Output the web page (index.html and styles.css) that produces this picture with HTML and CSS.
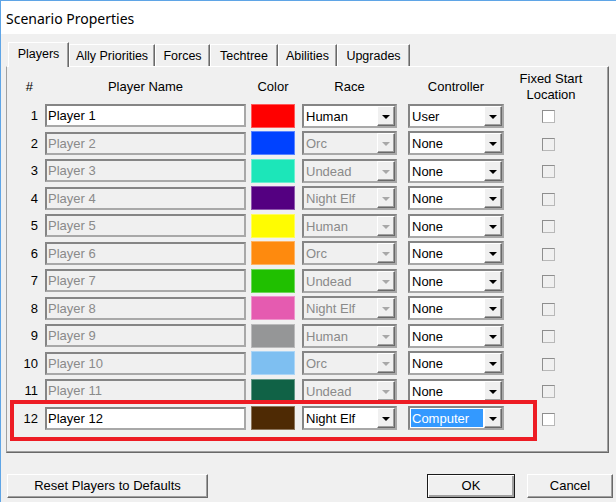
FILE: index.html
```html
<!DOCTYPE html>
<html>
  <head>
    <meta charset="utf-8">
    <title>Scenario Properties</title>
    <link rel="stylesheet" href="styles.css">
  </head>
  <body>
    <div class="window">
      <div class="titlebar">Scenario Properties</div>
      <div class="client">
        <div class="tabs">
          <div class="tab active t-players">Players</div>
          <div class="tab t-ally">Ally Priorities</div>
          <div class="tab t-forces">Forces</div>
          <div class="tab t-tech">Techtree</div>
          <div class="tab t-abil">Abilities</div>
          <div class="tab t-upg">Upgrades</div>
        </div>

        <div class="panel">
          <div class="head">
            <div class="c-num h-num">#</div>
            <div class="c-name">Player Name</div>
            <div class="c-color">Color</div>
            <div class="c-race">Race</div>
            <div class="c-ctrl">Controller</div>
            <div class="h-fixed">Fixed Start<br>Location</div>
          </div>

          <div class="row">
            <div class="c-num">1</div>
            <div class="c-name field">Player 1</div>
            <div class="c-color swatch" style="background:#ff0000"></div>
            <div class="c-race combo"><span class="val">Human</span><span class="drop"></span></div>
            <div class="c-ctrl combo"><span class="val">User</span><span class="drop"></span></div>
            <div class="check"></div>
          </div>
          <div class="row off">
            <div class="c-num">2</div>
            <div class="c-name field">Player 2</div>
            <div class="c-color swatch" style="background:#0042ff"></div>
            <div class="c-race combo"><span class="val">Orc</span><span class="drop"></span></div>
            <div class="c-ctrl combo"><span class="val">None</span><span class="drop"></span></div>
            <div class="check"></div>
          </div>
          <div class="row off">
            <div class="c-num">3</div>
            <div class="c-name field">Player 3</div>
            <div class="c-color swatch" style="background:#1ce6b9"></div>
            <div class="c-race combo"><span class="val">Undead</span><span class="drop"></span></div>
            <div class="c-ctrl combo"><span class="val">None</span><span class="drop"></span></div>
            <div class="check"></div>
          </div>
          <div class="row off">
            <div class="c-num">4</div>
            <div class="c-name field">Player 4</div>
            <div class="c-color swatch" style="background:#540081"></div>
            <div class="c-race combo"><span class="val">Night Elf</span><span class="drop"></span></div>
            <div class="c-ctrl combo"><span class="val">None</span><span class="drop"></span></div>
            <div class="check"></div>
          </div>
          <div class="row off">
            <div class="c-num">5</div>
            <div class="c-name field">Player 5</div>
            <div class="c-color swatch" style="background:#fffc01"></div>
            <div class="c-race combo"><span class="val">Human</span><span class="drop"></span></div>
            <div class="c-ctrl combo"><span class="val">None</span><span class="drop"></span></div>
            <div class="check"></div>
          </div>
          <div class="row off">
            <div class="c-num">6</div>
            <div class="c-name field">Player 6</div>
            <div class="c-color swatch" style="background:#fe8a0e"></div>
            <div class="c-race combo"><span class="val">Orc</span><span class="drop"></span></div>
            <div class="c-ctrl combo"><span class="val">None</span><span class="drop"></span></div>
            <div class="check"></div>
          </div>
          <div class="row off">
            <div class="c-num">7</div>
            <div class="c-name field">Player 7</div>
            <div class="c-color swatch" style="background:#20c000"></div>
            <div class="c-race combo"><span class="val">Undead</span><span class="drop"></span></div>
            <div class="c-ctrl combo"><span class="val">None</span><span class="drop"></span></div>
            <div class="check"></div>
          </div>
          <div class="row off">
            <div class="c-num">8</div>
            <div class="c-name field">Player 8</div>
            <div class="c-color swatch" style="background:#e55bb0"></div>
            <div class="c-race combo"><span class="val">Night Elf</span><span class="drop"></span></div>
            <div class="c-ctrl combo"><span class="val">None</span><span class="drop"></span></div>
            <div class="check"></div>
          </div>
          <div class="row off">
            <div class="c-num">9</div>
            <div class="c-name field">Player 9</div>
            <div class="c-color swatch" style="background:#959697"></div>
            <div class="c-race combo"><span class="val">Human</span><span class="drop"></span></div>
            <div class="c-ctrl combo"><span class="val">None</span><span class="drop"></span></div>
            <div class="check"></div>
          </div>
          <div class="row off">
            <div class="c-num">10</div>
            <div class="c-name field">Player 10</div>
            <div class="c-color swatch" style="background:#7ebff1"></div>
            <div class="c-race combo"><span class="val">Orc</span><span class="drop"></span></div>
            <div class="c-ctrl combo"><span class="val">None</span><span class="drop"></span></div>
            <div class="check"></div>
          </div>
          <div class="row off">
            <div class="c-num">11</div>
            <div class="c-name field">Player 11</div>
            <div class="c-color swatch" style="background:#106246"></div>
            <div class="c-race combo"><span class="val">Undead</span><span class="drop"></span></div>
            <div class="c-ctrl combo"><span class="val">None</span><span class="drop"></span></div>
            <div class="check"></div>
          </div>
          <div class="row marked">
            <div class="c-num">12</div>
            <div class="c-name field">Player 12</div>
            <div class="c-color swatch" style="background:#4e2a04"></div>
            <div class="c-race combo"><span class="val">Night Elf</span><span class="drop"></span></div>
            <div class="c-ctrl combo"><span class="val sel">Computer</span><span class="drop"></span></div>
            <div class="check"></div>
            <div class="highlight"></div>
          </div>
        </div>

        <div class="buttons">
          <div class="btn btn-reset">Reset Players to Defaults</div>
          <div class="btn btn-ok">OK</div>
          <div class="btn btn-cancel">Cancel</div>
        </div>
      </div>
    </div>
  </body>
</html>
```

FILE: styles.css
```css
* {
  box-sizing: border-box;
}
body {
  margin: 0;
  width: 616px;
  height: 502px;
  overflow: hidden;
  font-family: "Liberation Sans", Arial, sans-serif;
  font-size: 13px;
  color: #000;
  background: #f0f0f0;
}
.window {
  height: 502px;
  border-left: 1px solid #5fa5e6;
  border-top: 1px solid #5fa5e6;
  background: #f0f0f0;
}
.titlebar {
  height: 33px;
  line-height: 35px;
  padding-left: 5px;
  background: #fff;
  font-family: "Noto Sans", sans-serif;
  font-size: 14px;
}
.client {
  padding: 8px 7px 0 5px;
}

/* tab strip */
.tabs {
  display: flex;
  align-items: flex-end;
  height: 24px;
  padding-left: 2px;
  font-size: 12.5px;
}
.tab {
  height: 22px;
  line-height: 22px;
  text-align: center;
  white-space: nowrap;
  border-top: 1px solid #fff;
  border-left: 1px solid #fff;
  border-right: 1px solid #696969;
  box-shadow: inset -1px 0 0 #a0a0a0;
}
.tab.active {
  height: 25px;
  line-height: 22px;
  margin-bottom: -1px;
  position: relative;
  z-index: 1;
  background: #f0f0f0;
}
.t-players { width: 61px; }
.t-ally { width: 86px; }
.t-forces { width: 55px; }
.t-tech { width: 68px; }
.t-abil { width: 59px; }
.t-upg { width: 73px; }

/* players panel */
.panel {
  height: 387px;
  padding-top: 3px;
  border-top: 1px solid #fff;
  border-left: 1px solid #a0a0a0;
  border-right: 1px solid #696969;
  border-bottom: 1px solid #696969;
  box-shadow: inset -1px -1px 0 #a0a0a0;
}
.head {
  display: flex;
  align-items: center;
  height: 32px;
  padding-top: 2px;
  line-height: 16px;
  text-align: center;
}
.row {
  display: flex;
  align-items: center;
  height: 27.5px;
  position: relative;
}
.c-num {
  width: 31px;
  text-align: right;
}
.h-num {
  padding-right: 5px;
}
.c-name {
  width: 201px;
  margin-left: 7px;
}
.c-color {
  width: 44px;
  margin-left: 5px;
}
.c-race {
  width: 95px;
  margin-left: 7px;
}
.c-ctrl {
  width: 96px;
  margin-left: 11px;
}
.h-fixed {
  width: 90px;
  margin-left: 2px;
}

.field,
.combo {
  height: 23px;
  line-height: 20px;
  border: 2px solid;
  border-color: #858585 #a8a8a8 #a8a8a8 #858585;
  background: #fff;
  white-space: nowrap;
  overflow: hidden;
}
.field {
  padding-left: 1px;
}
.swatch {
  height: 24px;
  border: 1px solid rgba(255, 255, 255, 0.35);
}
.combo {
  display: flex;
  height: 24px;
  line-height: 21px;
}
.combo .val {
  flex: 1;
  padding-left: 2px;
}
.combo .sel {
  flex: none;
  width: 72px;
  margin: 1px 0 1px 1px;
  line-height: 19px;
  padding-left: 1px;
  background: #3399ff;
  color: #fff;
}
.combo .val.sel + .drop {
  margin-left: auto;
}
.drop {
  width: 18px;
  position: relative;
  background: #f0f0f0;
  border-top: 1px solid #fff;
  border-left: 1px solid #fff;
  border-right: 1px solid #696969;
  border-bottom: 1px solid #696969;
  box-shadow: inset -1px -1px 0 #a0a0a0;
}
.drop::after {
  content: "";
  position: absolute;
  left: 4px;
  top: 8px;
  border-left: 4px solid transparent;
  border-right: 4px solid transparent;
  border-top: 4px solid #000;
}
.check {
  width: 13px;
  height: 13px;
  margin-left: 38px;
  margin-top: 2px;
  border: 1px solid #8e8e8e;
  border-right-color: #b8b8b8;
  border-bottom-color: #b8b8b8;
  background: #fff;
}

/* disabled player slots */
.off .field,
.off .c-race {
  background: #f0f0f0;
  color: #8a8a8a;
}
.off .c-race .drop::after {
  border-top-color: #a8a8a8;
}
.off .check {
  background: #f0f0f0;
}

.highlight {
  position: absolute;
  left: 3px;
  top: -4.5px;
  width: 527px;
  height: 41px;
  border: 4px solid #ed1c24;
}

/* dialog buttons */
.buttons {
  display: flex;
  margin-top: 21px;
  margin-right: -4px;
}
.btn {
  height: 24px;
  line-height: 22px;
  text-align: center;
  background: #f0f0f0;
  border-top: 1px solid #fff;
  border-left: 1px solid #fff;
  border-right: 1px solid #696969;
  border-bottom: 1px solid #696969;
  box-shadow: inset -1px -1px 0 #a0a0a0;
}
.btn-reset {
  width: 201px;
  margin-left: 1px;
}
.btn-ok {
  width: 88px;
  margin-left: auto;
  border: 1px solid #1a1a1a;
  box-shadow: inset 1px 1px 0 #fff, inset -2px -2px 0 #a0a0a0;
}
.btn-cancel {
  width: 86px;
  margin-left: 12px;
}
```
